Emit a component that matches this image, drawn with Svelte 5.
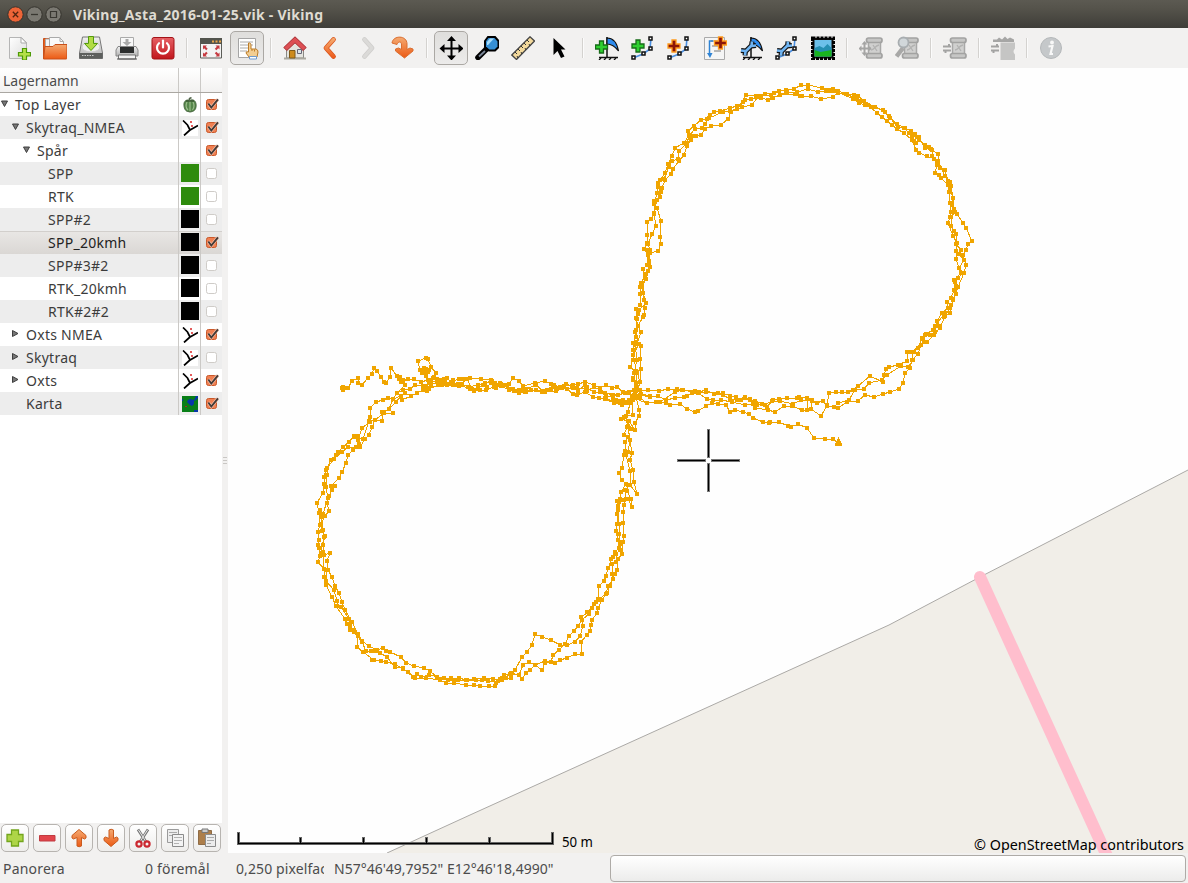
<script>
  const rows = [
    { label: 'Top Layer', depth: 0, arrow: 'down', icon: 'pepper', on: true },
    { label: 'Skytraq_NMEA', depth: 1, arrow: 'down', icon: 'trw', on: true },
    { label: 'Spår', depth: 2, arrow: 'down', on: true },
    { label: 'SPP', depth: 3, color: '#2e8b0d', on: false },
    { label: 'RTK', depth: 3, color: '#2e8b0d', on: false },
    { label: 'SPP#2', depth: 3, color: '#000', on: false },
    { label: 'SPP_20kmh', depth: 3, color: '#000', on: true, selected: true },
    { label: 'SPP#3#2', depth: 3, color: '#000', on: false },
    { label: 'RTK_20kmh', depth: 3, color: '#000', on: false },
    { label: 'RTK#2#2', depth: 3, color: '#000', on: false },
    { label: 'Oxts NMEA', depth: 1, arrow: 'right', icon: 'trw', on: true },
    { label: 'Skytraq', depth: 1, arrow: 'right', icon: 'trw', on: false },
    { label: 'Oxts', depth: 1, arrow: 'right', icon: 'trw', on: true },
    { label: 'Karta', depth: 1, icon: 'map', on: true }
  ];

  const flag = '<path d="M12 1V22" stroke="#111" stroke-width="1.5"/><path d="M12 2C18 2 22 7 23.500 15C19 9 16 8 12 8Z" fill="#2f8df0" stroke="#111" stroke-width="1.200"/><path d="M4 21.500H23" stroke="#111" stroke-width="1.500"/><path d="M6 22l-2 2M11 22l-2 2M16 22l-2 2M21 22l-2 2" stroke="#111" stroke-width="1.300"/>';
  const nodes = '<path d="M2 22L12 18L19 13L20 2" fill="none" stroke="#4b8fe0" stroke-width="1.600"/><g fill="#fff" stroke="#111" stroke-width="1.500"><path d="M1 20h3v3H1zM11 16h3v3h-3zM18 11h3v3h-3zM18 1h3v3h-3z"/></g>';
  const plus = (c, o, x, y) => `<path transform="translate(${x} ${y})" d="M4 0h4v4h4v4H8v4H4V8H0V4h4z" fill="${c}" stroke="${o}" stroke-width="1.300"/>`;
  const wrenchShape = 'M6 16L13 9M13 5.500L12.500 10L17 9.500M2 14.500L6.500 15L6 19.500';
  const wrench = `<path d="${wrenchShape}" stroke="#111" stroke-width="5" stroke-linejoin="round"/><path d="${wrenchShape}" stroke="#6fb4f2" stroke-width="2.600" stroke-linejoin="round"/>`;
  const scroll = '<path d="M9.500 6h12v12h-12z" fill="#d0d0cf" stroke="#a8a8a7" stroke-width="1.500"/><rect x="7.500" y="2" width="15.500" height="4.500" rx="2" fill="#c6c6c5" stroke="#a2a2a1" stroke-width="1.700"/><rect x="7.500" y="17.500" width="15.500" height="4.500" rx="2" fill="#c6c6c5" stroke="#a2a2a1" stroke-width="1.700"/><path d="M12 14c4 0 3-4 8-5M14 9l4 6" fill="none" stroke="#b2b2b1" stroke-width="1.300"/>';
  const swap = '<path d="M0 10.500h8M6 8v2.500M0 14.500h8M2.500 14.500V17" stroke="#a3a3a2" stroke-width="2" fill="none"/>';

  const icons = {
    new: '<path d="M2.500 1.500h12l5 5V22.500h-17z" fill="url(#paper)" stroke="#b5b5b5"/><path d="M14 1.500v5.500h5.500z" fill="#fff" stroke="#aaa"/><path d="M15.500 12.500h4v4h4v3.500h-4v4h-4v-4h-4v-3.500h4z" fill="#b5e04a" stroke="#4c9a06" stroke-width="1.200"/>',
    open: '<path d="M.5 2.500h8v20h-8z" fill="#e9601f" stroke="#c9501a"/><path d="M2.500 3h11l3 3v14h-14z" fill="#f4f4f4" stroke="#aaa"/><path d="M6.500 1.500h10l4 4v14h-14z" fill="#fafafa" stroke="#aaa"/><path d="M17 1.500v4h3.500" fill="none" stroke="#aaa"/><path d="M2 10.500h8l2-2h12v13.500q0 1-1 1H.5z" fill="url(#orange)" stroke="#c9501a"/>',
    save: '<path d="M3.500 1h17l3 16v5.500h-23V17z" fill="url(#metal)" stroke="#777"/><path d="M.5 17h23v5.500H.5z" fill="#5d5f5d"/><path d="M3 19.500h12" stroke="#ccc" stroke-dasharray="1.500 1"/><ellipse cx="12" cy="11" rx="9" ry="5" fill="#eee" stroke="#ccc"/><path d="M9.500.5h5v7h4L12 14.500 5.500 7.500h4z" fill="#b2dc45" stroke="#539a0c"/>',
    print: '<path d="M5.500 1.500h13v10h-13z" fill="#f8f8f8" stroke="#aaa"/><path d="M10.500 3h3v3h3L12 10 7.500 6h3z" fill="#aaa"/><path d="M3 10.500h18l2 3.500v6h-22v-6z" fill="url(#metal)" stroke="#888"/><path d="M5 11h14v6H5z" fill="#2c2e2e"/><path d="M3.500 19h17v4h-17z" fill="#f3f3f3" stroke="#777"/><path d="M2 23h20" stroke="#555"/>',
    power: '<rect x="1" y="1.500" width="22" height="21.500" rx="2" fill="url(#red)" stroke="#a31217"/><path d="M8 7.200a6 6 0 1 0 8 0" fill="none" stroke="#fff" stroke-width="2.200" stroke-linecap="round"/><path d="M12 4.500v7" stroke="#fff" stroke-width="2.200" stroke-linecap="round"/>',
    full: '<path d="M1.500 2.500h21v19.500h-21z" fill="#f3f3f3" stroke="#5b5d58"/><path d="M1 2h22v6H1z" fill="#53554e"/><path d="M13 5.500h2M16.500 5.500h2M20 5.500h2" stroke="#e9a64a" stroke-width="2"/><g fill="#c53a40"><path d="M4 9.500h4l-1.300 1.300 2 2-1.500 1.500-2-2L4 13.500zM20.500 9.500h-4l1.300 1.300-2 2 1.500 1.500 2-2 1.200 1.200zM4 20.500h4l-1.300-1.300 2-2-1.500-1.500-2 2L4 16.500zM20.500 20.500h-4l1.300-1.300-2-2 1.500-1.500 2 2 1.200-1.200z"/></g>',
    hand: '<path d="M3.500 2.500h17v19h-17z" fill="#fff" stroke="#a5a5a5"/><path d="M5 6h13M5 9h13M5 12h9M5 15h7" stroke="#aaa"/><path d="M13.500 7c2-.5 2.500 1 2.500 2.500v3.500h5q2 .5 2 3l-1 5h-8l-3-4q0-2 2.500-1z" fill="#f3ce92" stroke="#bd7c27"/><path d="M17 13v2M19.500 13.500v2" stroke="#bd7c27"/><path d="M14.500 20.500h7v2.500h-7z" fill="#fff" stroke="#6e9bd0"/>',
    home: '<path d="M3.500 10L12 2l8.500 8v12h-17z" fill="#e4e4df" stroke="#8a8a85"/><path d="M1 22.500h22" stroke="#aaa89f" stroke-width="2"/><path d="M6.500 14.500h5.500v7.500H6.500z" fill="#cd8b1c" stroke="#7f5a1a"/><path d="M14.500 13.500h4v4h-4z" fill="#dce5e8" stroke="#667"/><path d="M12 .8L.8 11.500l3 3L12 6.800l8.200 7.700 3-3z" fill="#dd4f54" stroke="#a72c30"/>',
    back: '<path d="M14.500 3.500L7 12l7.500 8.500" fill="none" stroke="#d8531a" stroke-width="4.800" stroke-linejoin="round" stroke-linecap="round"/><path d="M14.500 3.500L7 12l7.500 8.500" fill="none" stroke="url(#orangeS)" stroke-width="3.400" stroke-linejoin="round" stroke-linecap="round"/>',
    fwd: '<path d="M9.500 3.500L17 12l-7.500 8.500" fill="none" stroke="#cfcecc" stroke-width="4.800" stroke-linejoin="round" stroke-linecap="round"/><path d="M9.500 3.500L17 12l-7.500 8.500" fill="none" stroke="#dbdad8" stroke-width="3.200" stroke-linejoin="round" stroke-linecap="round"/>',
    jump: '<path d="M1 7C2-1 16-1 16 8v5.500l3-1.500 3 1v2L13.500 22 4.500 15v-2l3-1 3 1.500V8C10 5.500 7.500 5 6 8.500z" fill="url(#orange)" stroke="#da6e31"/>',
    pan: '<path d="M12.500 3V21M3 12.500H22" stroke="#000" stroke-width="2"/><path d="M12.500 0l4.500 5h-9zM12.500 24.500l4.500-5h-9zM.5 12.500l5-4.500v9zM24.500 12.500l-5-4.500v9z" fill="#000"/>',
    zoom: '<path d="M3 21.500L11 13.500" stroke="#000" stroke-width="5.500" stroke-linecap="round"/><path d="M4 20.500L10 15" stroke="#7b8798" stroke-width="1.800"/><path d="M13 1h7l3.500 4v6L20 14.500h-6L10 11V5z" fill="#368fd4" stroke="#000" stroke-width="2"/><path d="M12 9V6l3-3.500h4L13 9z" fill="#a5daf7"/>',
    ruler: '<path d="M.8 19L19 .8 23.500 5 5.500 23.500z" fill="#f3d99c" stroke="#444" stroke-width="1.300"/><path d="M4 16l2 2M7 13l2 2M10 10l2 2M13 7l2 2M16 4l2 2M7 22l-1-2M11 18l-1-2M15 14l-1-2M19 10l-1-2" stroke="#333"/>',
    arrow: '<path d="M6.500 2V19l4-4 3.500 7 3.500-1.500-3.500-7h4.500z" fill="#000"/>',
    wp: flag + plus('#2fd030', '#176c18', 0.500, 5),
    track: nodes + plus('#2fd030', '#176c18', 1, 4),
    route: nodes + plus('#8b1508', '#ff9a1b', 1, 4),
    note: '<path d="M1.500 1.500h20v22h-20z" fill="#f5f5f5" stroke="#aaa"/><path d="M8 5h10M9 10h9M11 15h7" stroke="#b6b6b6" stroke-width="2"/><path d="M10 5H6.500v14" fill="none" stroke="#2f83d4" stroke-width="1.500"/><path d="M4 17h5.500l-2.500 5z" fill="#2f83d4"/>' + plus('#8b1508', '#ff9a1b', 11.500, 1),
    editwp: flag + wrench,
    edittr: nodes + wrench,
    photo: '<path d="M1.500 2h21v20.500h-21z" fill="#111" stroke="#000" stroke-width="3" stroke-dasharray="3 1"/><path d="M3.500 4h17v16.500h-17z" fill="#6cc0ea"/><path d="M3.500 12l5-2 4 2 4-4 4 4v5h-17z" fill="#258fb2"/><path d="M3.500 14l6 2 11-2v6.500h-17z" fill="#19b420"/>',
    mapmove: scroll + '<path d="M5.500 7v11M1 12.500h11" stroke="#a5a5a4" stroke-width="2"/><path d="M5.500 5L8.500 8.500h-6zM5.500 20L8.500 16.500h-6zM-.5 12.500l3-3v6zM12.500 12.500l-3-3v6z" fill="#a5a5a4"/>',
    mapzoom: scroll + '<path d="M1.500 20.500L8 12" stroke="#a8a8a7" stroke-width="4.500"/><circle cx="8.500" cy="6.500" r="5" fill="#d1d7da" stroke="#a8adb0" stroke-width="1.800"/>',
    mapswap: scroll + swap,
    cloud: '<path d="M9.500 6.500h14.500v6q-3 3 0 6v5.500H9.500z" fill="#c5c5c4"/><path d="M2 3.500h4l2-2 3 2 3-3 2.500 2.500 2.500-1.500 4 2V6H2z" fill="#a6a6a5"/>' + swap,
    info: '<circle cx="12" cy="12" r="10.500" fill="#c5c8ca" stroke="#b5b8ba"/><circle cx="13" cy="6.500" r="1.900" fill="#f8f8f8"/><path d="M9.500 10.500l4-.5-2 8h2.500" fill="none" stroke="#f8f8f8" stroke-width="2.200"/>',
    add: '<path d="M8.500 4h7v4.500H20v7h-4.500V20h-7v-4.500H4v-7h4.500z" fill="#aed547" stroke="#73a51d" stroke-width="1.300"/>',
    del: '<path d="M4.500 9.500h15.500v5.500H4.500z" fill="#e2444b" stroke="#c03b40"/>',
    up: '<path d="M10 20V11.500L6.500 13 5 12v-2.500L12 3.500l7 6V12l-1.500 1L14.500 11.500V20q-2.500 1.500-4.500 0z" fill="url(#orange)" stroke="#c95b1e"/>',
    down: '<path d="M10 4v8.500L6.500 11 5 12v2.500l7 6 7-6V12l-1.500-1-3 1.500V4Q12 2.500 10 4z" fill="url(#orange)" stroke="#c95b1e"/>',
    cut: '<path d="M7 3.500L15 16M17 3.500L9 16" stroke="#777" stroke-width="2.800"/><path d="M7.500 4l7 11M16.500 4l-7 11" stroke="#e7e7e7"/><circle cx="8" cy="18" r="2.600" fill="none" stroke="#cb2830" stroke-width="2.200"/><circle cx="16" cy="18" r="2.600" fill="none" stroke="#cb2830" stroke-width="2.200"/>',
    copy: '<path d="M4.500 3.500h11v13h-11z" fill="#ededed" stroke="#9b9b9b"/><path d="M6 6.500h8M6 9.500h8" stroke="#aaa"/><path d="M9.500 8.500h11v12h-11z" fill="#f3f3f3" stroke="#8b8b8b"/><path d="M11 11.500h8M11 14.500h8M11 17.500h5" stroke="#b3b3b3"/>',
    paste: '<path d="M3.500 4.500h13v14h-13z" fill="#ad7e4a" stroke="#8f6c46"/><path d="M7 3h6v3.500H7z" fill="#ccc" stroke="#777"/><path d="M10.500 8.500h10v12h-10z" fill="#ececec" stroke="#8b8b8b"/><path d="M12 11.500h7M12 14.500h7M12 17.500h4" stroke="#aaa"/>'
  };

  const toolbar = ['new', 'open', 'save', 'print', 'power', '|', 'full', 'hand*', '|', 'home', 'back', 'fwd', 'jump', '|', 'pan*', 'zoom', 'ruler', 'arrow', '|', 'wp', 'track', 'route', 'note', 'editwp', 'edittr', 'photo', '|', 'mapmove', 'mapzoom', '|', 'mapswap', '|', 'cloud', '|', 'info'];
  const layerButtons = ['add', 'del', 'up', 'down', 'cut', 'copy', 'paste'];

  // Recorded laps, in thirds of a pixel from each group's origin.
  const south = [
    '125,145 130,140 130,150 136,145 143,145 156,123 174,114 174,129 186,135 204,114 216,102 222,84 231,93 243,111 252,126 258,129 270,111 273,84 291,108 300,111 309,120 324,117 342,117 363,126 384,120 399,114 408,99 393,81 384,57 378,53 354,63 360,90 372,84 372,96 387,90 366,100 384,96 378,86 378,108 393,126 411,123 441,114 453,126 477,117 489,117 510,114 543,117 573,120 585,129 603,132 627,132 640,114 657,123 669,138 705,129 735,123 753,132 780,141 798,132 816,138 834,132 855,126 882,135 900,144 918,135 936,144 951,141 969,156 987,156 1002,150 1044,150',
    '291,159 309,150 330,147 345,135 369,138 387,129 414,129 420,122 426,134 435,122 435,132 459,129 474,132 486,132 504,141 534,135 555,129 576,123 597,135 615,135 639,147 657,150 678,147 708,135 729,153 753,147 765,141 780,141 801,147 819,162 831,165 861,153 882,141 900,150 915,159 939,165 954,165 975,159 1000,168 1020,165 1050,170',
    '306,180 333,168 351,159 369,150 380,152 387,147 414,135 426,126 441,135 459,135 480,135 510,147 522,153 540,150 558,150 582,141 603,138 627,150 645,153 657,159 675,156 693,150 726,156 768,153 786,144 819,144 834,153 855,135 861,141 855,156 879,171 897,174 915,177 942,189 966,195 978,189 948,183 963,186 987,186 1000,175 1041,189',
    '378,141 393,138 390,120 402,111 411,117 417,130 423,119 429,130 432,117 447,132 459,120 465,134 477,138 500,117 515,147 534,144 549,135 560,141 573,129 585,135 600,129 588,144 606,135 630,147 642,153 660,153 669,150 678,156 708,150 735,156 741,150 762,135 771,147 792,138 819,135 831,144 858,144 882,156 903,156 918,165 939,174 969,180 987,180 1005,165',
    '1008,6 999,30 999,60 990,81 1005,96 999,120 1008,141 1002,168 990,189 984,216 972,231 963,237 984,243 981,261 972,285 984,291 975,306 975,333 972,345 966,384 957,399 966,420 978,432 963,456 960,477 951,483 954,498 951,522 951,552 948,573 954,600 957,624 945,636 933,657 939,651 924,684 918,708 912,723 897,738 894,777 882,792 867,816 843,831 849,858 840,888 825,906 801,915 780,915 753,900 726,891 705,882 696,915 681,936 666,951 645,990 633,1014 618,1014 606,1014 588,1030 585,1038 567,1038 540,1038 522,1035 498,1035 462,1030 438,1029 420,1020 378,1014 345,1014 324,996 309,987 285,972 258,966 243,963 216,960 222,960 189,936 171,921 174,888 162,870 150,858 141,852 135,837 108,798 96,771 78,735 72,711 72,687 54,666 60,648 57,624 54,615 57,600 54,576 60,555 57,519 51,489 69,459 72,432 72,411 78,390 93,360 108,345 114,336 129,321 147,306 162,288 174,300 186,264 210,246 210,231 210,204 228,186 249,180 264,174 279,177 291,159 315,135 309,120 297,117 303,126 324,117',
    '1023,18 1020,57 1023,87 1020,126 1008,168 1017,210 1017,228 1005,249 1005,270 987,243 984,261 990,300 996,339 990,360 999,390 1002,426 1011,462 990,435 975,450 978,477 972,495 969,516 969,549 972,588 969,606 966,642 954,657 951,690 945,702 930,738 921,759 906,780 894,804 891,819 876,840 873,855 870,873 861,885 843,906 846,942 825,942 801,954 780,960 765,969 735,963 705,975 687,966 669,975 657,1005 633,999 606,1020 579,1017 552,1014 522,1017 498,1020 477,1014 462,1020 444,1020 411,1011 390,993 372,984 342,978 318,969 303,951 270,936 258,933 249,924 231,930 207,918 186,903 174,882 156,846 135,810 126,786 117,759 105,738 96,711 84,690 81,663 90,639 72,645 69,615 75,588 66,573 63,552 75,528 87,513 81,489 87,468 96,450 105,438 93,438 117,414 126,396 138,369 144,345 159,330 180,321 195,297 207,285 216,261 225,240 246,243 246,216 267,207 279,177 303,168 306,180',
    '1005,12 1017,12 999,45 1011,99 1008,130 996,170 999,225 978,228 993,267 984,258 990,300 984,336 978,345 990,393 990,435 984,435 981,453 993,477 996,501 984,477 972,480 957,486 954,510 957,552 957,582 960,606 963,612 960,630 948,642 948,666 936,672 936,702 939,717 924,738 918,762 894,780 888,786 876,804 861,816 867,822 846,840 834,858 822,873 807,888 795,912 777,930 759,945 753,966 735,969 726,990 705,975 690,990 678,999 666,1017 657,1005 630,1002 612,1005 600,1017 594,1024 564,1024 546,1020 528,1020 501,1020 474,1020 453,1014 432,1014 387,1005 363,1011 351,1002 339,1011 309,984 285,981 261,951 240,939 225,933 213,933 198,933 186,906 162,876 150,870 147,837 123,801 111,798 111,783 102,750 78,723 81,690 72,687 69,636 60,648 72,591 69,570 63,531 60,510 69,522 84,474 78,441 81,405 81,384 102,357 126,336 144,321 168,321 177,312 174,288 162,290 189,297 207,243 225,240 252,219 279,219 267,207 288,186 303,168 315,159 333,168'
  ];
  const north = [
    '99,924 108,903 90,891 99,870 99,855 99,840 99,819 108,801 105,786 114,768 108,744 108,717 120,705 120,672 120,651 123,639 135,618 129,597 141,585 144,555 132,537 141,519 141,495 141,456 153,447 162,432 162,402 171,369 174,351 180,330 195,309 204,282 216,258 225,234 252,219 267,195 264,183 282,168 303,150 321,147 330,135 342,126 360,123 390,114 411,108 429,96 438,75 468,78 495,72 522,69 537,63 558,60 582,57 603,45 624,45 666,54 699,57 714,63 741,72 762,75 774,78 792,93 825,111 849,120 867,138 891,162 915,174 933,183 957,201 957,210 975,225 987,231 993,237 1014,252 1014,273 1020,294 1035,300 1044,333 1053,348 1059,384 1062,417 1071,432 1089,459 1098,474 1116,513 1104,522 1098,540 1089,555 1098,585 1092,609 1074,651 1059,690 1050,729 1035,738 1020,774 1002,795 981,816 963,825 954,852 936,870 930,894 915,909 909,939 897,957 870,966 849,972 822,981 795,975 774,993 741,996 714,1014 681,1008 663,1038 633,1018 636,990 621,984 621,1020 606,1020 576,1008 552,1008 525,1026 504,1020 465,1014 459,1002 435,1005 396,996 363,990 339,990 321,987 294,969 276,969 261,978 252,981 225,984 198,990 174,978 150,978 123,972',
    '120,936 111,906 123,897 120,867 123,828 111,822 123,786 114,768 129,741 132,735 135,714 132,690 129,669 126,642 138,627 150,591 147,573 150,549 174,543 183,522 180,501 183,453 171,414 162,393 180,381 186,354 195,330 213,312 219,297 237,273 252,255 261,228 273,210 279,198 288,198 303,195 315,177 333,168 363,165 384,147 393,126 426,111 456,105 474,81 504,90 519,84 540,75 585,72 600,78 606,78 633,78 663,87 699,81 714,66 759,87 777,99 795,105 804,105 831,129 846,141 861,153 876,165 891,177 912,189 936,210 948,240 957,249 981,258 1002,267 1011,285 1005,309 1017,315 1023,324 1044,345 1047,366 1050,399 1053,426 1050,441 1044,459 1059,498 1071,519 1068,543 1068,567 1077,594 1083,609 1062,630 1062,660 1053,684 1041,696 1044,714 1026,729 1011,753 1017,768 999,780 978,792 966,804 954,834 942,846 930,846 921,846 921,873 894,885 867,891 858,897 852,915 849,936 810,918 774,948 759,960 744,966 726,966 708,966 687,969 681,1005 669,993 651,999 636,993 621,984 597,981 591,984 561,984 537,987 519,990 495,1005 465,993 450,990 435,981 411,990 408,981 390,978 369,969 354,969 342,972 318,960 297,966 285,963 249,960 231,957 204,957 177,963 144,960 120,960',
    '108,951 102,909 111,870 105,822 114,822 108,780 111,747 114,732 117,720 138,699 129,669 135,612 144,603 147,579 141,540 150,540 144,522 156,492 168,468 162,429 171,390 183,366 183,357 174,339 192,327 207,291 216,273 234,267 237,243 261,219 267,198 285,177 306,174 315,162 327,144 369,126 390,123 411,117 435,90 453,87 483,84 477,78 513,75 516,84 561,66 591,66 624,57 654,66 687,63 678,63 699,63 714,69 738,72 771,87 783,93 813,111 825,111 855,126 870,144 894,171 912,174 927,189 945,192 948,219 936,198 954,201 975,234 996,240 996,258 1014,273 1035,318 1050,336 1050,354 1059,384 1056,405 1065,426 1053,441 1053,468 1062,483 1068,492 1068,522 1083,540 1077,552 1092,570 1077,594 1089,609 1074,624 1065,636 1068,648 1068,672 1053,705 1050,714 1032,741 1035,729 1005,768 1005,786 990,795 975,795 972,816 936,846 939,870 924,891 903,888 861,915 846,930 807,939 792,957 765,960 747,990 714,999 702,1011 681,1008 669,993 636,993 603,990 579,1002 540,993 516,993 501,1011 486,1002 471,1005 450,987 423,990 390,987 369,975 318,966 285,966 246,960 225,966 180,996 198,999',
    '0,954 18,945 36,954 51,951 69,966 87,969 102,978 93,990 75,996 66,1005 42,999 57,996 18,987 15,984 39,975 54,975 15,969 0,966',
    '111,960 105,975 99,990 120,985 141,999 168,996 198,999 210,1005 240,1002 261,1017 285,1026 294,1023 318,1008 336,999 354,1002 378,1005 390,1026 405,1020 429,1026 447,1032 459,1044 489,1056 507,1059 510,1056 537,1056 564,1068 573,1071 594,1062 621,1074 642,1104 675,1107 699,1107 715,1119'
  ];
  const parse = (list, ox, oy) =>
    list.map((s) => s.split(' ').map((p) => {
      const [x, y] = p.split(',').map(Number);
      return [Math.round(ox + x / 3), Math.round(oy + y / 3)];
    }));
  const laps = [...parse(south, 300, 340), ...parse(north, 600, 70)];
  const line = (pts) => pts.map((p) => p.join(',')).join(' ');
  const dots = (pts) => pts.map(([x, y]) => `M${x - 2} ${y - 2}h4v4h-4z`).join('');

  const crossGrey = 'M677 459h29v3h-29zM711 459h29v3h-29zM707 429h3v29h-3zM707 463h3v29h-3z';
  const crossBlack = 'M678 460h27v1h-27zM712 460h27v1h-27zM708 430h1v27h-1zM708 464h1v27h-1z';
  const scaleGrey = 'M237 832h3v10h311v-10h3v13h-317zM299 837h3v5h-3zM362 837h3v5h-3zM425 837h3v5h-3zM488 837h3v5h-3z';
  const scaleBlack = 'M238 833h1v10h313v-10h1v11h-315zM300 838h1v5h-1zM363 838h1v5h-1zM426 838h1v5h-1zM489 838h1v5h-1z';
</script>

<svg class="defs" width="0" height="0">
  <defs>
    <linearGradient id="paper" x2="1" y2="1"><stop stop-color="#fff" /><stop offset="1" stop-color="#dcdcdc" /></linearGradient>
    <linearGradient id="orange" x2="0" y2="1"><stop stop-color="#f4aa72" /><stop offset="1" stop-color="#ec5a14" /></linearGradient>
    <linearGradient id="orangeS" gradientUnits="userSpaceOnUse" x1="0" y1="2" x2="0" y2="22"><stop stop-color="#f6ad72" /><stop offset="1" stop-color="#ed5a1a" /></linearGradient>
    <linearGradient id="metal" x2="0" y2="1"><stop stop-color="#f0f0f0" /><stop offset="1" stop-color="#b2b2b2" /></linearGradient>
    <linearGradient id="red" x2="0" y2="1"><stop stop-color="#e66065" /><stop offset="1" stop-color="#c1161c" /></linearGradient>
  </defs>
</svg>

<div class="window">
  <header class="title">
    <svg width="66" height="28" viewBox="0 0 66 28">
      <circle cx="15.500" cy="14.500" r="7.700" fill="#ee6437" stroke="#35332d" />
      <path d="M12.800 11.800l5.400 5.400M18.200 11.800l-5.400 5.400" stroke="#52240f" stroke-width="1.300" />
      <circle cx="34.500" cy="14.500" r="7.700" fill="#7b7972" stroke="#35332d" />
      <path d="M31 14.500h7" stroke="#393731" stroke-width="1.300" />
      <circle cx="53.500" cy="14.500" r="7.700" fill="#7b7972" stroke="#35332d" />
      <path d="M50.500 11.500h6v6h-6z" fill="none" stroke="#393731" stroke-width="1.200" />
    </svg>
    <h1>Viking_Asta_2016-01-25.vik - Viking</h1>
  </header>

  <nav class="toolbar">
    {#each toolbar as t}
      {#if t === '|'}
        <span class="sep"></span>
      {:else}
        <span class="tool" class:active={t.endsWith('*')}>
          <svg width="24" height="24" viewBox="0 0 24 24" fill="none">{@html icons[t.replace('*', '')]}</svg>
        </span>
      {/if}
    {/each}
  </nav>

  <main>
    <aside>
      <div class="tree">
        <div class="row head"><span class="name">Lagernamn</span><span class="cell"></span><span class="cell last"></span></div>
        {#each rows as r, i}
          <div class="row" class:alt={i % 2 === 1} class:selected={r.selected}>
            <span class="name" style="padding-left: {r.depth * 11}px">
              <svg class="expander" width="15" height="22" viewBox="0 0 15 22">
                {#if r.arrow === 'down'}
                  <path d="M1.500 8h6L4.500 13.500z" fill="#777" stroke="#3f3f3f" />
                {:else if r.arrow === 'right'}
                  <path d="M1.500 7.500v6L7 10.500z" fill="#777" stroke="#3f3f3f" />
                {/if}
              </svg>{r.label}
            </span>
            <span class="cell">
              {#if r.color}
                <i class="swatch" style="background: {r.color}"></i>
              {:else if r.icon === 'pepper'}
                <svg width="16" height="16" viewBox="0 0 16 16">
                  <path d="M8 3.500C5 2 1.500 4 2 8c0 4 2 6.500 4 6.500l2 .5 2.500-.5c3-1 4-4 3.500-7.500C13.500 3 10 2 8 3.500z" fill="#55864a" stroke="#47663f" />
                  <path d="M5 5c-1.500 3-1 6 1 8M8 4v10M11 5c1.500 3 1 6-.5 8" stroke="#9cbd8d" stroke-width="1.200" fill="none" />
                  <path d="M4 4h8" stroke="#3c5a34" stroke-width="1.500" />
                  <path d="M7.500 4V1.500l2-1" stroke="#52654a" stroke-width="1.500" fill="none" />
                </svg>
              {:else if r.icon === 'trw'}
                <svg width="16" height="16" viewBox="0 0 16 16">
                  <path d="M0 0h16v16H0z" fill="#fff" />
                  <path d="M1 0.500L5.500 5l2.500 5L16 5.500M8 10L2 15.500" fill="none" stroke="#000" stroke-width="1.700" />
                  <path d="M8 1h2v2H8zM9 5h2v2H9z" fill="#e35b5b" />
                </svg>
              {:else if r.icon === 'map'}
                <svg width="16" height="16" viewBox="0 0 16 16">
                  <path d="M0 0h16v16H0z" fill="#087f17" />
                  <path d="M6 4l2-1 4 1v4l-2 2-2-1-3-3zM12 4l2-4h2v2l-3 3zM0 3h1v2H0zM12 14h4v2h-4z" fill="#0736a8" />
                  <path d="M3 10h2v1H3z" fill="#a52a20" />
                </svg>
              {/if}
            </span>
            <span class="cell last">
              <svg width="15" height="14" viewBox="0 0 15 14">
                {#if r.on}
                  <rect x="1.500" y="2.500" width="10" height="10" rx="2" fill="#f08052" stroke="#c9592b" />
                  <path d="M3.300 6.500l3 4L13 2.300" fill="none" stroke="#f6c6b1" stroke-width="3" />
                  <path d="M3.300 6.500l3 4L13 2.300" fill="none" stroke="#443a36" stroke-width="1.900" />
                {:else}
                  <rect x="1.500" y="2.500" width="10" height="10" rx="2" fill="#fff" stroke="#cfccc8" />
                {/if}
              </svg>
            </span>
          </div>
        {/each}
      </div>
      <div class="buttons">
        {#each layerButtons as b}
          <span class="btn"><svg width="24" height="24" viewBox="0 0 24 24" fill="none">{@html icons[b]}</svg></span>
        {/each}
      </div>
    </aside>
    <div class="grip"><i></i><i></i><i></i></div>
    <section class="map">
      <svg width="960" height="785" viewBox="228 68 960 785">
        <path d="M387 853L470 815 889 625 980 577 1188 470V853z" fill="#f1eee8" />
        <path d="M387 853L470 815 889 625 980 577 1188 470" fill="none" stroke="#aba9a6" />
        <path d="M980 577L1107 856" stroke="#ffbecd" stroke-width="12" stroke-linecap="round" />
        <g shape-rendering="crispEdges">
          {#each laps as lap}
            <polyline points={line(lap)} fill="none" stroke="#f0a500" stroke-width="1" />
            <path d={dots(lap)} fill="#f0a500" />
          {/each}
          <path d="M838 437h1v2h1v2h1v2h1v3h-7v-3h1v-2h1v-2h1z" fill="#f0a500" />
          <path d={crossGrey} fill="#777" />
          <path d={crossBlack} fill="#000" />
          <path d={scaleGrey} fill="#666" />
          <path d={scaleBlack} fill="#000" />
        </g>
        <text x="562" y="847" textLength="31" lengthAdjust="spacingAndGlyphs">50 m</text>
        <text x="974" y="850" textLength="210" lengthAdjust="spacingAndGlyphs">© OpenStreetMap contributors</text>
      </svg>
    </section>
  </main>

  <footer>
    <span class="s1">Panorera</span>
    <span class="s2">0 föremål</span>
    <span class="s3">0,250 pixelfac</span>
    <span class="s4">N57°46'49,7952" E12°46'18,4990"</span>
    <span class="progress"></span>
  </footer>
</div>

<style>
  :global(body) { margin: 0; overflow: hidden; }
  .defs { position: absolute; }
  .window { width: 1188px; height: 883px; display: flex; flex-direction: column; background: #f2f1f0; font-family: "Noto Sans", "Open Sans", sans-serif; font-size: 14px; color: #3c3c3c; }
  .title { height: 28px; display: flex; align-items: center; background: linear-gradient(#5c5a52, #55534b 30%, #3e3d38); flex: none; }
  h1 { margin: 0 0 0 7px; padding-top: 1px; font-size: 14px; line-height: 28px; color: #dfdbd2; font-weight: 700; white-space: nowrap; letter-spacing: 0.28px; }
  .toolbar { height: 40px; flex: none; display: flex; align-items: center; padding-left: 1px; background: #f2f1f0; }
  .tool { width: 36px; height: 34px; flex: none; display: flex; align-items: center; justify-content: center; box-sizing: border-box; }
  .tool.active { width: 34px; margin: 0 1px; border: 1px solid #aba8a4; border-radius: 5px; background: linear-gradient(#dfdedc, #ecebea); }
  .sep { width: 1px; height: 20px; margin: 0 5px; background: #d4d2cf; border-right: 1px solid #fbfbfb; flex: none; }
  svg { display: block; flex: none; }
  main { display: flex; height: 785px; flex: none; }
  aside { width: 222px; display: flex; flex-direction: column; }
  .tree { height: 755px; background: #fff; }
  .row { height: 23px; display: flex; background: #fff; line-height: 23px; }
  .alt { background: #ededed; }
  .selected { background: linear-gradient(#e9e7e5, #dad7d4); box-shadow: inset 0 1px #d2cfcc; color: #222; }
  .head { height: 25px; box-sizing: border-box; line-height: 25px; border-bottom: 1px solid #aaa7a2; background: linear-gradient(#fff, #f2f1f0); color: #4c4c4c; }
  .head .name { padding-left: 3px; letter-spacing: 0; }
  .name { width: 178px; box-sizing: border-box; display: flex; white-space: nowrap; letter-spacing: 0.27px; }
  .cell { width: 22px; box-sizing: border-box; border-left: 1px solid #cbc9c6; display: flex; align-items: center; justify-content: center; }
  .last { justify-content: flex-start; padding-left: 4px; }
  .last svg { margin-bottom: 1px; }
  .swatch { width: 18px; height: 18px; margin-bottom: 1px; }
  .buttons { height: 30px; display: flex; gap: 4px; padding: 1px 0 0 1px; box-sizing: border-box; }
  .btn { width: 28px; height: 28px; flex: none; box-sizing: border-box; border: 1px solid #b7b4b0; border-radius: 5px; background: linear-gradient(#fff, #eeedeb); display: flex; align-items: center; justify-content: center; }
  .grip { width: 6px; display: flex; flex-direction: column; align-items: center; justify-content: center; gap: 2px; }
  .grip i { width: 4px; height: 1px; background: #c9c7c4; }
  .map { background: #fefefe; width: 960px; }
  .map text { fill: #000; font-size: 14px; }
  footer { flex: 1; display: flex; line-height: 31px; padding-left: 3px; white-space: nowrap; color: #4c4c4c; }
  .s1 { width: 142px; letter-spacing: 0.2px; }
  .s2 { width: 91px; letter-spacing: 0.2px; }
  .s3 { width: 88px; overflow: hidden; margin-right: 10px; letter-spacing: 0.1px; }
  .s4 { width: 276px; }
  .progress { width: 574px; height: 25px; margin-top: 2px; border: 1px solid #aeaba7; border-radius: 4px; background: linear-gradient(#fff, #ececeb); }
</style>
